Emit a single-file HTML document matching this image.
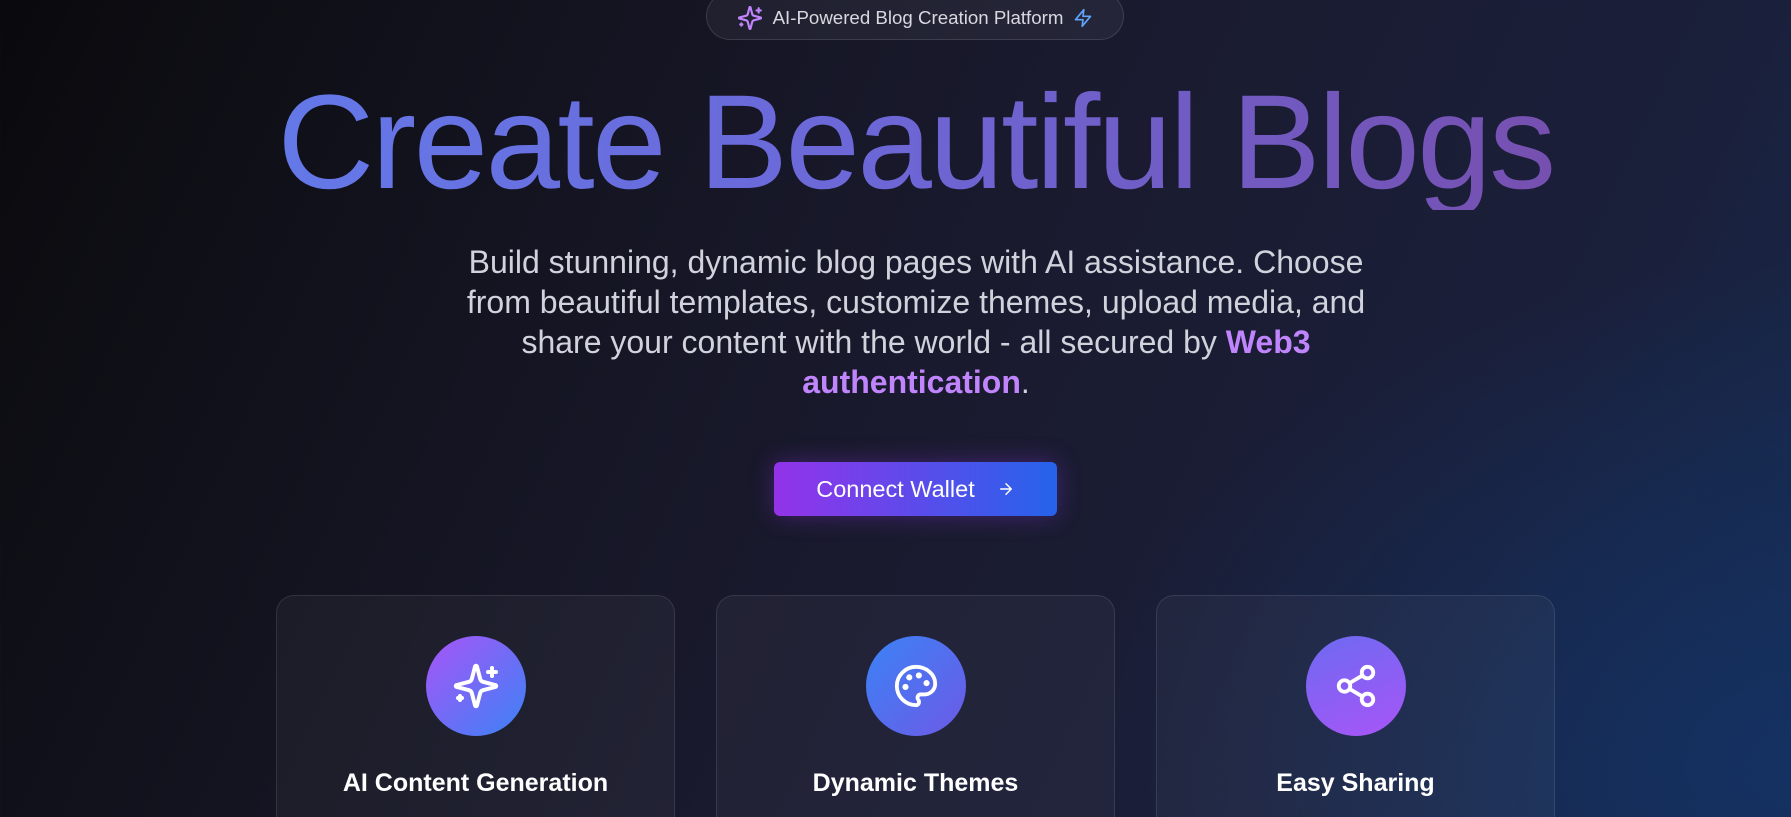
<!DOCTYPE html>
<html><head><meta charset="utf-8">
<style>
*{margin:0;padding:0;box-sizing:border-box}
html,body{width:1791px;height:817px;overflow:hidden}
body{font-family:"Liberation Sans",Arial,sans-serif;color:#fff;
background:radial-gradient(ellipse 700px 500px at 1791px 760px,rgba(20,50,100,.9),rgba(20,40,80,0) 100%),
linear-gradient(115deg,#0a0a0d 0%,#13131f 25%,#1a1b30 55%,#1a1f3a 80%,#172a4d 100%);position:relative}
.wrap{position:absolute;left:276px;width:1279px;top:0}
.badge{position:absolute;left:430px;top:-8px;width:418px;height:48px;border:1px solid rgba(255,255,255,.12);border-radius:24px;background:rgba(255,255,255,.05);display:flex;align-items:center;justify-content:center;gap:10px;font-size:18.7px;color:#d8d8e0;padding-top:4px}
h1{position:absolute;top:76px;left:-200px;width:1679px;text-align:center;font-size:134px;font-weight:400;letter-spacing:-2.6px;line-height:134px;white-space:nowrap;
background:linear-gradient(90deg,transparent 0,transparent 200px,#6478e8 200px,#6c68d8 760px,#7650b0 1480px);-webkit-background-clip:text;background-clip:text;color:transparent}
p.lead{position:absolute;top:242px;left:180px;width:920px;text-align:center;font-size:32px;line-height:40px;color:#d0d3dc}
p.lead b{color:#c084fc;font-weight:700}
.btn{position:absolute;left:498px;top:462px;width:283px;height:54px;border-radius:6px;background:linear-gradient(90deg,#9333ea,#2563eb);display:flex;align-items:center;justify-content:center;gap:22px;font-size:23.5px;color:#fff;box-shadow:0 0 24px rgba(147,51,234,.35)}
.card{position:absolute;top:595px;width:399px;height:260px;border:1px solid rgba(255,255,255,.1);border-radius:18px;background:rgba(255,255,255,.04)}
.ic{position:absolute;left:149px;top:40px;width:100px;height:100px;border-radius:50%;display:flex;align-items:center;justify-content:center}
.card h3{position:absolute;top:173px;width:100%;text-align:center;font-size:25px;font-weight:700;color:#fff}
</style></head><body>
<div class="wrap">
 <div class="badge">
  <svg width="26" height="26" viewBox="0 0 24 24" fill="none" stroke="#c084fc" stroke-width="2" stroke-linecap="round" stroke-linejoin="round"><path d="M9.9 15.5A2 2 0 0 0 8.5 14.1L2.4 12.5a.5.5 0 0 1 0-1l6.1-1.6A2 2 0 0 0 9.9 8.5L11.5 2.4a.5.5 0 0 1 1 0l1.6 6.1a2 2 0 0 0 1.4 1.4l6.1 1.6a.5.5 0 0 1 0 1l-6.1 1.6a2 2 0 0 0-1.4 1.4l-1.6 6.1a.5.5 0 0 1-1 0z"/><path d="M20 3v4M22 5h-4M4 17v2M5 18H3"/></svg>
  <span>AI-Powered Blog Creation Platform</span>
  <svg width="20" height="20" viewBox="0 0 24 24" fill="none" stroke="#60a5fa" stroke-width="2" stroke-linejoin="round"><path d="M13 2 3 14h9l-1 8 10-12h-9l1-8z"/></svg>
 </div>
 <h1>Create Beautiful Blogs</h1>
 <p class="lead">Build stunning, dynamic blog pages with AI assistance. Choose from beautiful templates, customize themes, upload media, and share your content with the world - all secured by <b>Web3 authentication</b>.</p>
 <div class="btn"><span>Connect Wallet</span><svg width="18" height="18" viewBox="0 0 24 24" fill="none" stroke="#fff" stroke-width="2" stroke-linecap="round" stroke-linejoin="round"><path d="M5 12h14M12 5l7 7-7 7"/></svg></div>

 <div class="card" style="left:0">
  <div class="ic" style="background:linear-gradient(135deg,#a855f7,#3b82f6)">
   <svg width="48" height="48" viewBox="0 0 24 24" fill="none" stroke="#fff" stroke-width="2" stroke-linecap="round" stroke-linejoin="round"><path d="M9.9 15.5A2 2 0 0 0 8.5 14.1L2.4 12.5a.5.5 0 0 1 0-1l6.1-1.6A2 2 0 0 0 9.9 8.5L11.5 2.4a.5.5 0 0 1 1 0l1.6 6.1a2 2 0 0 0 1.4 1.4l6.1 1.6a.5.5 0 0 1 0 1l-6.1 1.6a2 2 0 0 0-1.4 1.4l-1.6 6.1a.5.5 0 0 1-1 0z"/><path d="M20 3v4M22 5h-4M4 17v2M5 18H3"/></svg>
  </div>
  <h3>AI Content Generation</h3>
 </div>
 <div class="card" style="left:440px">
  <div class="ic" style="background:linear-gradient(135deg,#3b82f6,#6d5ae6)">
   <svg width="46" height="46" viewBox="0 0 24 24" fill="none" stroke="#fff" stroke-width="2" stroke-linecap="round" stroke-linejoin="round"><circle cx="13.5" cy="6.5" r=".6" fill="#fff"/><circle cx="17.5" cy="10.5" r=".6" fill="#fff"/><circle cx="8.5" cy="7.5" r=".6" fill="#fff"/><circle cx="6.5" cy="12.5" r=".6" fill="#fff"/><path d="M12 2C6.5 2 2 6.5 2 12s4.5 10 10 10c.9 0 1.6-.7 1.6-1.7 0-.4-.2-.8-.4-1.1-.3-.3-.4-.7-.4-1.1a1.6 1.6 0 0 1 1.6-1.7h2c3.1 0 5.6-2.5 5.6-5.6C22 6 17.5 2 12 2z"/></svg>
  </div>
  <h3>Dynamic Themes</h3>
 </div>
 <div class="card" style="left:880px">
  <div class="ic" style="background:linear-gradient(160deg,#6d6af0,#a855f7)">
   <svg width="46" height="46" viewBox="0 0 24 24" fill="none" stroke="#fff" stroke-width="2" stroke-linecap="round" stroke-linejoin="round"><circle cx="18" cy="5" r="3"/><circle cx="6" cy="12" r="3"/><circle cx="18" cy="19" r="3"/><path d="m8.6 13.5 6.8 4M15.4 6.5l-6.8 4"/></svg>
  </div>
  <h3>Easy Sharing</h3>
 </div>
</div>
</body></html>
